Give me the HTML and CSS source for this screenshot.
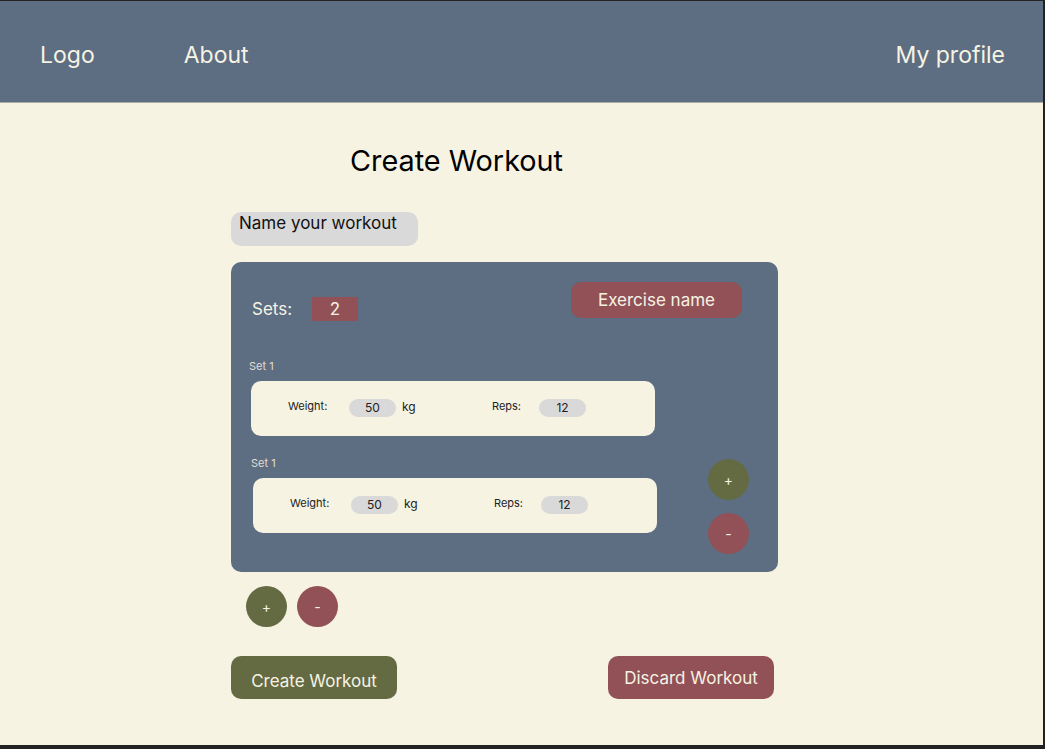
FILE: index.html
```html
<!DOCTYPE html>
<html lang="en">
<head>
<meta charset="utf-8">
<title>Create Workout</title>
<link rel="stylesheet" href="styles.css">
</head>
<body>
<div class="frame">
  <header class="header">
    <nav class="nav-left">
      <a class="nav-link logo">Logo</a>
      <a class="nav-link about">About</a>
    </nav>
    <a class="nav-link">My profile</a>
  </header>
  <main class="main">
    <h1 class="title">Create Workout</h1>
    <div class="name-input">Name your workout</div>
    <section class="card">
      <div class="card-top">
        <div class="sets">
          <span class="sets-label">Sets:</span>
          <span class="sets-value">2</span>
        </div>
        <div class="exercise-name">Exercise name</div>
      </div>
      <div class="card-body">
        <div class="set-list">
          <div class="set-group">
            <div class="set-label">Set 1</div>
            <div class="set-row">
              <span class="field-label weight-label">Weight:</span>
              <span class="pill">50</span>
              <span class="unit">kg</span>
              <span class="field-label reps-label">Reps:</span>
              <span class="pill">12</span>
            </div>
          </div>
          <div class="set-group shifted">
            <div class="set-label">Set 1</div>
            <div class="set-row">
              <span class="field-label weight-label">Weight:</span>
              <span class="pill">50</span>
              <span class="unit">kg</span>
              <span class="field-label reps-label">Reps:</span>
              <span class="pill">12</span>
            </div>
          </div>
        </div>
        <div class="set-actions">
          <button class="circle olive">+</button>
          <button class="circle maroon">-</button>
        </div>
      </div>
    </section>
    <div class="exercise-actions">
      <button class="circle olive">+</button>
      <button class="circle maroon">-</button>
    </div>
    <div class="bottom-actions">
      <button class="btn olive create">Create Workout</button>
      <button class="btn maroon discard">Discard Workout</button>
    </div>
  </main>
</div>
</body>
</html>
```
FILE: styles.css
```css
* { box-sizing: border-box; }
html, body { margin: 0; padding: 0; }
body {
  font-family: Inter, "Noto Sans", "Liberation Sans", sans-serif;
  background: #222222;
}
.frame {
  width: 1045px;
  height: 749px;
  background: #f6f3e3;
  border-top: 1px solid #222222;
  border-right: 2px solid #222222;
  border-bottom: 4px solid #222222;
  overflow: hidden;
}
.header {
  height: 102px;
  background: #5d6d82;
  border-bottom: 1px solid #aeaca2;
  display: flex;
  align-items: center;
  justify-content: space-between;
  padding: 7px 38px 0 40px;
}
.nav-left { display: flex; align-items: center; }
.nav-link {
  color: #f6f3e3;
  font-size: 23px;
  text-decoration: none;
}
.about { margin-left: 89px; }
.main {
  padding-left: 231px;
  width: 778px;
}
.title {
  font-size: 28.8px;
  font-weight: 400;
  color: #000;
  margin: 41px 0 0 119px;
  line-height: 34px;
}
.name-input {
  margin-top: 34px;
  width: 187px;
  height: 34px;
  background: #d9d9d9;
  border-radius: 10px;
  padding: 0 8px;
  font-size: 17px;
  line-height: 22px;
  color: #111;
}
.card {
  margin-top: 16px;
  width: 547px;
  height: 310px;
  background: #5d6d82;
  border-radius: 10px;
  padding: 20px 28px 18px 18px;
  display: flex;
  flex-direction: column;
}
.card-top {
  display: flex;
  justify-content: space-between;
  align-items: flex-start;
  height: 39px;
}
.sets {
  display: flex;
  align-items: center;
  margin: 15px 0 0 3px;
}
.sets-label {
  color: #f6f3e3;
  font-size: 17px;
  width: 60px;
}
.sets-value {
  width: 46px;
  height: 24px;
  background: #925157;
  color: #f6f3e3;
  font-size: 17px;
  display: flex;
  align-items: center;
  justify-content: center;
}
.exercise-name {
  width: 171px;
  height: 36px;
  margin-right: 8px;
  border-radius: 10px;
  background: #925157;
  color: #f6f3e3;
  font-size: 17px;
  display: flex;
  align-items: center;
  justify-content: center;
}
.card-body {
  display: flex;
  align-items: flex-end;
  margin-top: 38px;
  flex: 1;
}
.set-list {
  display: flex;
  flex-direction: column;
  gap: 20px;
  padding-bottom: 21px;
}
.set-group.shifted { margin-left: 2px; }
.set-group.shifted .set-label { margin-left: 0; }
.set-label {
  font-size: 11px;
  line-height: 14px;
  color: #e0ddd4;
  margin-bottom: 8px;
}
.set-row {
  margin-left: 2px;
  width: 404px;
  height: 55px;
  background: #f6f3e3;
  border-radius: 10px;
  display: flex;
  align-items: center;
  padding-left: 37px;
}
.field-label {
  font-size: 11px;
  color: #222;
  position: relative;
  top: -3px;
}
.weight-label { width: 61px; }
.reps-label { width: 47px; }
.pill {
  width: 47px;
  height: 18px;
  border-radius: 9px;
  background: #d9d9d9;
  font-size: 12px;
  color: #222;
  display: flex;
  align-items: center;
  justify-content: center;
  position: relative;
  top: -1px;
}
.unit {
  font-size: 12px;
  color: #222;
  margin-left: 6px;
  width: 90px;
  position: relative;
  top: -2px;
}
.set-actions {
  margin-left: auto;
  margin-right: 1px;
  display: flex;
  flex-direction: column;
  gap: 13px;
}
.circle {
  width: 41px;
  height: 41px;
  border-radius: 50%;
  border: none;
  padding: 0;
  color: #f6f3e3;
  font-family: inherit;
  font-size: 14px;
  display: flex;
  align-items: center;
  justify-content: center;
}
.olive { background: #646b43; }
.maroon { background: #925157; }
.exercise-actions {
  display: flex;
  gap: 10px;
  margin: 14px 0 0 15px;
}
.bottom-actions {
  display: flex;
  justify-content: space-between;
  width: 543px;
  margin-top: 29px;
}
.btn {
  width: 166px;
  height: 43px;
  border: none;
  border-radius: 10px;
  color: #f6f3e3;
  font-family: inherit;
  font-size: 17px;
  padding: 0;
}
.create { padding-top: 6px; }
```
